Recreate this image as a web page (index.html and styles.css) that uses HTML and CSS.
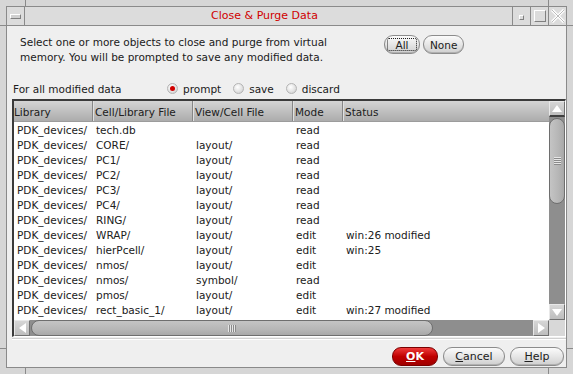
FILE: index.html
```html
<!DOCTYPE html>
<html lang="en">

<head>
    <meta charset="UTF-8">
    <meta name="viewport" content="width=device-width, initial-scale=1.0">
    <title>Close &amp; Purge Data</title>
    <link rel="stylesheet" href="styles.css">
</head>

<body>
    <div class="window">
        <div class="inner">
            <div class="titlebar">
                <div class="tb-btn menu"><span class="dash"></span></div>
                <div class="title">Close &amp; Purge Data</div>
                <div class="tb-btn"><span class="mini"></span></div>
                <div class="tb-btn"><span class="maxi"></span></div>
                <div class="tb-btn close">
                    <svg width="14" height="14" viewBox="0 0 14 14">
                        <path d="M1 1 L13 13 M13 1 L1 13" stroke="#fff" stroke-width="3" />
                        <path d="M1 1 L13 13 M13 1 L1 13" stroke="#bcbcbc" stroke-width="1" />
                    </svg>
                </div>
            </div>

            <div class="content">
                <div class="intro">
                    <p class="intro-text">Select one or more objects to close and purge from virtual<br>memory. You will be prompted to save any modified data.</p>
                    <div class="intro-buttons">
                        <button class="pill focus"><span>All</span></button>
                        <button class="pill">None</button>
                    </div>
                </div>

                <div class="options">
                    <span class="options-label">For all modified data</span>
                    <label class="radio"><span class="dot checked"></span>prompt</label>
                    <label class="radio"><span class="dot"></span>save</label>
                    <label class="radio"><span class="dot"></span>discard</label>
                </div>

                <div class="table">
                    <div class="list">
                        <div class="row head">
                            <div class="c1">Library</div>
                            <div class="c2">Cell/Library File</div>
                            <div class="c3">View/Cell File</div>
                            <div class="c4">Mode</div>
                            <div class="c5">Status</div>
                        </div>
                        <div class="rows" id="rows"></div>
                    </div>
                    <div class="vscroll">
                        <div class="arrow up"></div>
                        <div class="vthumb"><span class="grip-h"></span></div>
                        <div class="trough"></div>
                        <div class="arrow down"></div>
                    </div>
                    <div class="hscroll">
                        <div class="arrow left"></div>
                        <div class="hthumb"><span class="grip-v"></span></div>
                        <div class="trough"></div>
                        <div class="arrow right"></div>
                    </div>
                    <div class="corner"></div>
                </div>

                <div class="footer">
                    <button class="pill ok"><u>O</u>K</button>
                    <button class="pill cancel"><u>C</u>ancel</button>
                    <button class="pill help"><u>H</u>elp</button>
                </div>
            </div>
        </div>
    </div>

    <script>
        const items = [
            ["PDK_devices/", "tech.db", "", "read", ""],
            ["PDK_devices/", "CORE/", "layout/", "read", ""],
            ["PDK_devices/", "PC1/", "layout/", "read", ""],
            ["PDK_devices/", "PC2/", "layout/", "read", ""],
            ["PDK_devices/", "PC3/", "layout/", "read", ""],
            ["PDK_devices/", "PC4/", "layout/", "read", ""],
            ["PDK_devices/", "RING/", "layout/", "read", ""],
            ["PDK_devices/", "WRAP/", "layout/", "edit", "win:26 modified"],
            ["PDK_devices/", "hierPcell/", "layout/", "edit", "win:25"],
            ["PDK_devices/", "nmos/", "layout/", "edit", ""],
            ["PDK_devices/", "nmos/", "symbol/", "read", ""],
            ["PDK_devices/", "pmos/", "layout/", "edit", ""],
            ["PDK_devices/", "rect_basic_1/", "layout/", "edit", "win:27 modified"]
        ];

        const rowsBox = document.getElementById('rows');
        items.forEach(item => {
            const row = document.createElement('div');
            row.className = 'row';
            item.forEach((text, i) => {
                const cell = document.createElement('div');
                cell.className = 'c' + (i + 1);
                cell.textContent = text;
                row.appendChild(cell);
            });
            rowsBox.appendChild(row);
        });
    </script>
</body>

</html>
```

FILE: styles.css
```css
* {
    box-sizing: border-box;
}

body {
    margin: 0;
    font-family: "DejaVu Sans", "Liberation Sans", sans-serif;
    font-size: 10.5px;
    color: #202020;
}

.window {
    width: 573px;
    height: 374px;
    padding: 6px;
    background-color: #d6d6d6;
    background-image:
        linear-gradient(#8a8a8a, #8a8a8a),
        linear-gradient(#8a8a8a, #8a8a8a),
        linear-gradient(#8a8a8a, #8a8a8a),
        linear-gradient(#8a8a8a, #8a8a8a),
        linear-gradient(#8a8a8a, #8a8a8a),
        linear-gradient(#8a8a8a, #8a8a8a),
        linear-gradient(#8a8a8a, #8a8a8a),
        linear-gradient(#8a8a8a, #8a8a8a);
    background-repeat: no-repeat;
    background-size: 1px 6px, 1px 6px, 1px 6px, 1px 6px, 6px 1px, 6px 1px, 6px 1px, 6px 1px;
    background-position: 25px 0, 548px 0, 25px 368px, 548px 368px, 0 25px, 567px 25px, 0 348px, 567px 348px;
}

.inner {
    height: 100%;
    border: 1px solid #8a8a8a;
    display: flex;
    flex-direction: column;
}

/* title bar */

.titlebar {
    height: 19px;
    display: flex;
    background-color: #dcdcdc;
    border-bottom: 1px solid #8a8a8a;
}

.tb-btn {
    width: 18px;
    display: flex;
    align-items: center;
    justify-content: center;
    border-left: 1px solid #8a8a8a;
}

.tb-btn.menu {
    border-left: none;
    border-right: 1px solid #8a8a8a;
}

.dash {
    width: 11px;
    height: 5px;
    border: 1px solid;
    border-color: #fff #808080 #808080 #fff;
    background-color: #d0d0d0;
}

.mini {
    width: 5px;
    height: 5px;
    margin-top: 3px;
    border: 1px solid;
    border-color: #fff #808080 #808080 #fff;
}

.maxi {
    width: 12px;
    height: 12px;
    border: 1px solid;
    border-color: #fff #808080 #808080 #fff;
}

.title {
    flex: 1;
    text-align: center;
    font-family: "DejaVu Sans", sans-serif;
    font-size: 11px;
    line-height: 18px;
    color: #d00000;
    padding-right: 8px;
}

/* content */

.content {
    flex: 1;
    display: flex;
    flex-direction: column;
    padding: 9px 0 0 5px;
    background-color: #efefef;
}

.intro {
    height: 46px;
    display: flex;
    align-items: flex-start;
    padding-left: 8px;
}

.intro-text {
    margin: 0;
    line-height: 15px;
    width: 364px;
}

.intro-buttons {
    display: flex;
    gap: 3px;
}

.pill {
    height: 19px;
    padding: 0 6px;
    font-family: inherit;
    font-size: 10.5px;
    color: #202020;
    border: 1px solid #8c8c8c;
    border-radius: 9px;
    background: linear-gradient(#fbfbfb, #e6e6e6 50%, #cfcfcf);
    box-shadow: inset 0 -1px 0 #b0b0b0;
}

.pill.focus {
    width: 36px;
    padding: 2px;
}

.pill.focus span {
    display: block;
    height: 100%;
    line-height: 13px;
    border: 1px dotted #202020;
    border-radius: 2px;
}

.options {
    height: 15px;
    display: flex;
    align-items: center;
    margin-bottom: 3px;
}

.options-label {
    width: 155px;
    padding-left: 1px;
}

.radio {
    display: flex;
    align-items: center;
    gap: 5px;
    margin-right: 12px;
}

.dot {
    width: 11px;
    height: 11px;
    border-radius: 50%;
    border: 1px solid #b4b4b4;
    background: radial-gradient(circle at 40% 35%, #ffffff, #e0e0e0 60%, #c4c4c4);
    display: flex;
    align-items: center;
    justify-content: center;
}

.dot.checked::after {
    content: "";
    width: 5px;
    height: 5px;
    border-radius: 50%;
    background-color: #d00000;
}

/* table */

.table {
    width: 554px;
    height: 238px;
    display: grid;
    grid-template-columns: 535px 16px;
    grid-template-rows: 219px 16px;
    border-style: solid;
    border-width: 2px 1px 1px 2px;
    border-color: #3a3a3a #ffffff #ffffff #3a3a3a;
    background-color: #fff;
}

.list {
    overflow: hidden;
}

.row {
    display: flex;
    height: 15px;
    line-height: 15px;
    white-space: nowrap;
}

.row > div {
    padding-left: 3px;
}

.c1 { width: 79px; }
.c2 { width: 100px; }
.c3 { width: 100px; }
.c4 { width: 50px; }
.c5 { flex: 1; }

.row.head {
    height: 21px;
    line-height: 22px;
    background: linear-gradient(#d4d4d4, #acacac);
    border-bottom: 1px solid #9c9c9c;
}

.row.head > div {
    padding-left: 2px;
    border-right: 1px solid #868686;
    box-shadow: 1px 0 0 #e0e0e0;
}

.row.head > div.c1 {
    padding-left: 0;
}

.row.head > div.c5 {
    border-right: none;
    box-shadow: none;
}

.rows {
    padding-top: 1px;
}

.vscroll {
    display: flex;
    flex-direction: column;
    background-color: #8e8e8e;
}

.hscroll {
    display: flex;
    background-color: #8e8e8e;
}

.corner {
    background-color: #d8d8d8;
}

.trough {
    flex: 1;
}

.arrow {
    width: 16px;
    height: 16px;
    flex: none;
    background: linear-gradient(#d6d6d6, #bdbdbd);
    border: 1px solid;
    border-color: #e8e8e8 #707070 #707070 #e8e8e8;
    display: flex;
    align-items: center;
    justify-content: center;
}

.arrow.up {
    height: 16px;
    border-bottom: 2px solid #404040;
}

.arrow::after {
    content: "";
    width: 0;
    height: 0;
    border: 5px solid transparent;
}

.arrow.up::after {
    border-bottom: 7px solid #fff;
    border-top: none;
}

.arrow.down::after {
    border-top: 7px solid #fff;
    border-bottom: none;
}

.arrow.left::after {
    border-right: 7px solid #fff;
    border-left: none;
}

.arrow.right::after {
    border-left: 7px solid #fff;
    border-right: none;
}

.vthumb {
    height: 86px;
    margin: 1px 0 0;
    border: 1px solid #6e6e6e;
    border-radius: 8px;
    background: linear-gradient(90deg, #c4c4c4, #b6b6b6 60%, #a8a8a8);
    display: flex;
    align-items: center;
    justify-content: center;
}

.grip-h {
    width: 7px;
    height: 8px;
    background: repeating-linear-gradient(#e6e6e6 0 1px, #8a8a8a 1px 2px);
}

.hthumb {
    width: 402px;
    margin-left: 1px;
    border: 1px solid #6e6e6e;
    border-radius: 8px;
    background: linear-gradient(#c4c4c4, #b6b6b6 60%, #a8a8a8);
    display: flex;
    align-items: center;
    justify-content: center;
}

.grip-v {
    width: 8px;
    height: 7px;
    background: repeating-linear-gradient(90deg, #e6e6e6 0 1px, #8a8a8a 1px 2px);
}

/* footer */

.footer {
    flex: 1;
    display: flex;
    justify-content: flex-end;
    align-items: flex-start;
    gap: 5px;
    margin-top: 1px;
    padding: 8px 2px 0 0;
    border-top: 1px solid #d0d0d0;
    box-shadow: inset 0 1px 0 #ffffff;
}

.footer .pill {
    font-size: 11px;
}

.pill.ok {
    width: 46px;
    color: #fff;
    font-weight: bold;
    border-color: #7a0000;
    background: linear-gradient(#ee3a3a, #c00000 50%, #a00000);
    box-shadow: none;
}

.pill.cancel {
    width: 62px;
}

.pill.help {
    width: 54px;
}
```
